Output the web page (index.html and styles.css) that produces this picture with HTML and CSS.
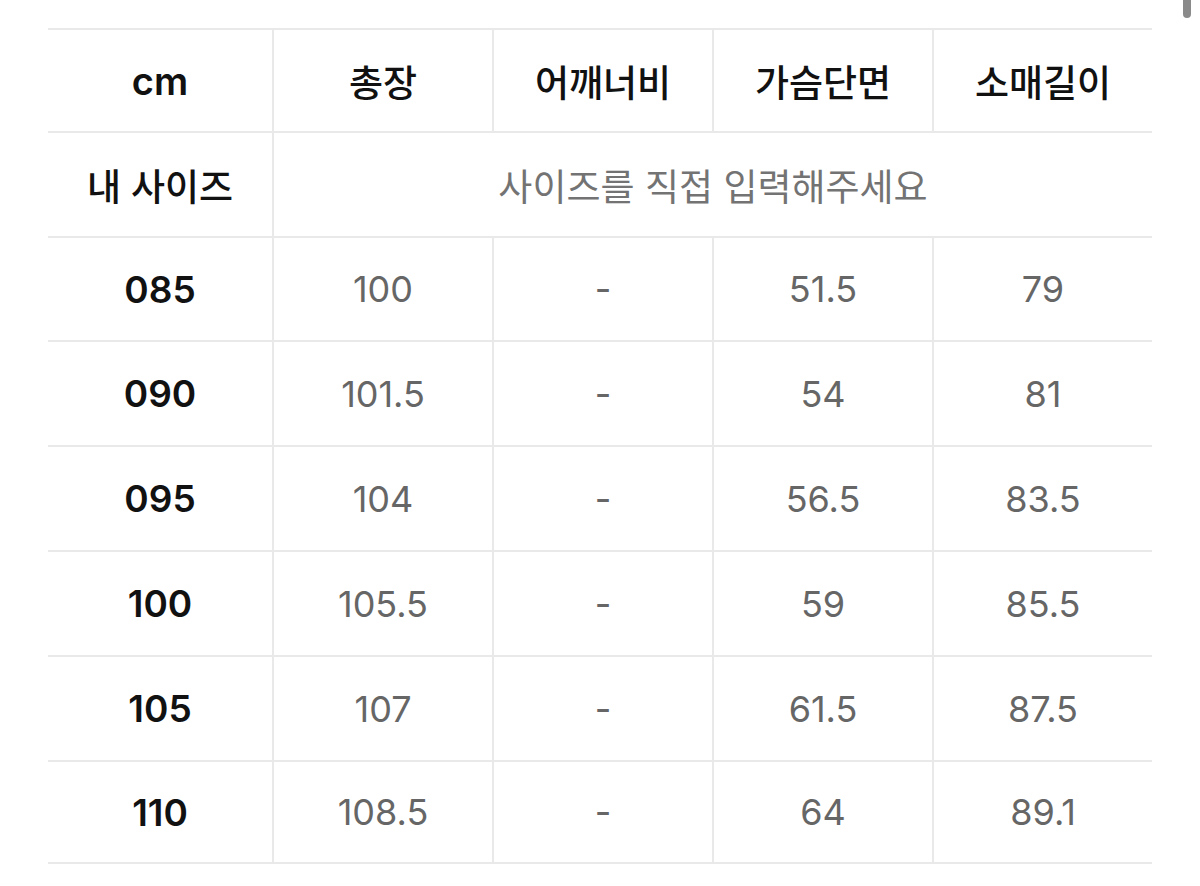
FILE: index.html
```html
<!DOCTYPE html>
<html lang="ko">
<head>
<meta charset="utf-8">
<title>사이즈</title>
<link rel="stylesheet" href="styles.css">
</head>
<body>
<div class="page">
  <div class="size-table">
    <div class="cell head latin">cm</div>
    <div class="cell head">총장</div>
    <div class="cell head">어깨너비</div>
    <div class="cell head">가슴단면</div>
    <div class="cell head">소매길이</div>

    <div class="cell head">내 사이즈</div>
    <div class="cell hint span4">사이즈를 직접 입력해주세요</div>

    <div class="cell size">085</div>
    <div class="cell val">100</div>
    <div class="cell val">-</div>
    <div class="cell val">51.5</div>
    <div class="cell val">79</div>

    <div class="cell size">090</div>
    <div class="cell val">101.5</div>
    <div class="cell val">-</div>
    <div class="cell val">54</div>
    <div class="cell val">81</div>

    <div class="cell size">095</div>
    <div class="cell val">104</div>
    <div class="cell val">-</div>
    <div class="cell val">56.5</div>
    <div class="cell val">83.5</div>

    <div class="cell size">100</div>
    <div class="cell val">105.5</div>
    <div class="cell val">-</div>
    <div class="cell val">59</div>
    <div class="cell val">85.5</div>

    <div class="cell size">105</div>
    <div class="cell val">107</div>
    <div class="cell val">-</div>
    <div class="cell val">61.5</div>
    <div class="cell val">87.5</div>

    <div class="cell size">110</div>
    <div class="cell val">108.5</div>
    <div class="cell val">-</div>
    <div class="cell val">64</div>
    <div class="cell val">89.1</div>
  </div>
</div>
<div class="scroll-thumb"></div>
</body>
</html>
```

FILE: styles.css
```css
html, body {
  margin: 0;
  padding: 0;
  background: #ffffff;
}

body {
  font-family: Inter, "Noto Sans CJK KR", sans-serif;
  width: 1200px;
  height: 886px;
  overflow: hidden;
  position: relative;
}

.page {
  padding: 28px 48px 0 48px;
}

.size-table {
  width: 1104px;
  display: grid;
  grid-template-columns: 224px 218px 218px 218px 218px;
  grid-template-rows: 101px 103px 102px 103px 103px 103px 103px 100px;
  gap: 2px;
  padding: 2px 0;
  background: #e9e9e9;
}

.cell {
  background: #ffffff;
  display: flex;
  align-items: center;
  justify-content: center;
  white-space: nowrap;
}

.head {
  color: #111111;
  font-size: 37px;
  font-weight: 500;
}

.latin {
  font-weight: 600;
  font-size: 38px;
}

.size {
  color: #111111;
  font-size: 37px;
  font-weight: 600;
}

.val {
  color: #666666;
  font-size: 36px;
  font-weight: 400;
}

.hint {
  color: #737373;
  font-size: 37px;
  font-weight: 400;
}

.span4 {
  grid-column: span 4;
}

.scroll-thumb {
  position: absolute;
  left: 1183px;
  top: -6px;
  width: 8px;
  height: 24px;
  border-radius: 4px;
  background: #8a8a8a;
}
```
